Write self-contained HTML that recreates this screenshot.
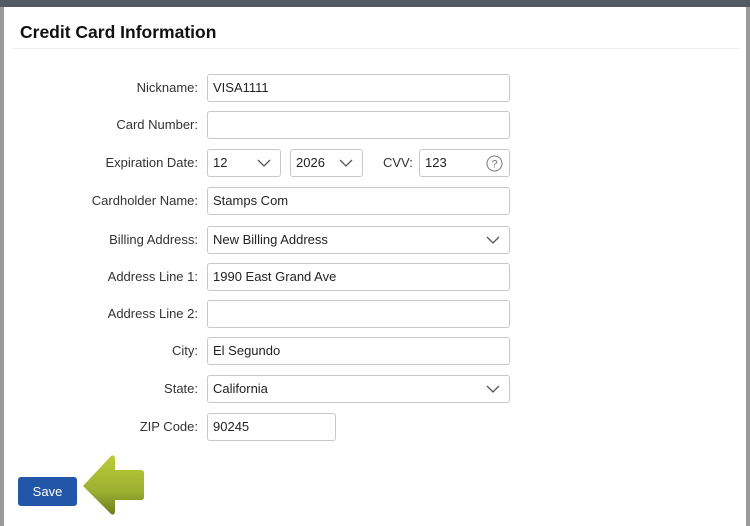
<!DOCTYPE html>
<html><head><meta charset="utf-8"><style>
*{box-sizing:border-box;margin:0;padding:0}
body{width:750px;height:526px;overflow:hidden;background:#fff;font-family:"Liberation Sans",sans-serif;color:#222;position:relative}
.top{position:absolute;left:0;top:0;width:750px;height:7px;background:#535a63}
.lb{position:absolute;left:0;top:7px;width:4px;height:519px;background:#9a9a9a}
.rb{position:absolute;left:746px;top:7px;width:4px;height:519px;background:#9a9a9a}
h1{position:absolute;left:20px;top:22px;font-size:17.5px;font-weight:bold;color:#111}
.sep{position:absolute;left:12px;top:48px;width:728px;height:1px;background:#eee}
.lbl{position:absolute;right:552px;font-size:13px;color:#333;line-height:28px}
.in{position:absolute;height:28px;border:1px solid #c8c8c8;border-radius:3px;font-size:13px;line-height:26px;padding-left:5px;color:#222}
.chev{position:absolute;right:9px;top:9px;width:14px;height:8px}
.save{position:absolute;left:18px;top:477px;width:59px;height:29px;background:#2256a8;border-radius:3px;color:#fff;font-size:13px;line-height:29px;text-align:center}
</style></head><body>
<div class="top"></div><div class="lb"></div><div class="rb"></div>
<h1>Credit Card Information</h1><div class="sep"></div>

<div class="lbl" style="top:74px">Nickname:</div><div class="in" style="left:207px;top:74px;width:303px">VISA1111</div>
<div class="lbl" style="top:111px">Card Number:</div><div class="in" style="left:207px;top:111px;width:303px"></div>
<div class="lbl" style="top:149px">Expiration Date:</div>
<div class="in" style="left:207px;top:149px;width:74px">12<svg class="chev" viewBox="0 0 14 8"><path d="M1 1l6 6 6-6" fill="none" stroke="#555" stroke-width="1.3"/></svg></div>
<div class="in" style="left:290px;top:149px;width:73px">2026<svg class="chev" viewBox="0 0 14 8"><path d="M1 1l6 6 6-6" fill="none" stroke="#555" stroke-width="1.3"/></svg></div>
<div style="position:absolute;left:383px;top:149px;font-size:13px;line-height:28px;color:#333">CVV:</div>
<div class="in" style="left:419px;top:149px;width:91px">123<svg style="position:absolute;right:6px;top:5px" width="17" height="17" viewBox="0 0 17 17"><circle cx="8.5" cy="8.5" r="7.5" fill="none" stroke="#777" stroke-width="1"/><text x="8.5" y="12.5" font-size="11" text-anchor="middle" fill="#777" font-family="Liberation Sans">?</text></svg></div>
<div class="lbl" style="top:187px">Cardholder Name:</div><div class="in" style="left:207px;top:187px;width:303px">Stamps Com</div>
<div class="lbl" style="top:226px">Billing Address:</div><div class="in" style="left:207px;top:226px;width:303px">New Billing Address<svg class="chev" viewBox="0 0 14 8"><path d="M1 1l6 6 6-6" fill="none" stroke="#555" stroke-width="1.3"/></svg></div>
<div class="lbl" style="top:263px">Address Line 1:</div><div class="in" style="left:207px;top:263px;width:303px">1990 East Grand Ave</div>
<div class="lbl" style="top:300px">Address Line 2:</div><div class="in" style="left:207px;top:300px;width:303px"></div>
<div class="lbl" style="top:337px">City:</div><div class="in" style="left:207px;top:337px;width:303px">El Segundo</div>
<div class="lbl" style="top:375px">State:</div><div class="in" style="left:207px;top:375px;width:303px">California<svg class="chev" viewBox="0 0 14 8"><path d="M1 1l6 6 6-6" fill="none" stroke="#555" stroke-width="1.3"/></svg></div>
<div class="lbl" style="top:413px">ZIP Code:</div><div class="in" style="left:207px;top:413px;width:129px">90245</div>

<div class="save">Save</div>
<svg style="position:absolute;left:80px;top:452px" width="66" height="66" viewBox="0 0 66 66">
<defs><linearGradient id="g" x1="0" y1="0" x2="0" y2="1"><stop offset="0" stop-color="#b9cd3a"/><stop offset="0.6" stop-color="#9cb031"/><stop offset="1" stop-color="#6d7f22"/></linearGradient></defs>
<path d="M3 34 L31 4 Q34 2 35 6 L35 18 L61 18 Q64 18 64 21 L64 45 Q64 48 61 48 L35 48 L35 60 Q34 64 31 62 Z" fill="url(#g)"/>
</svg>
</body></html>
